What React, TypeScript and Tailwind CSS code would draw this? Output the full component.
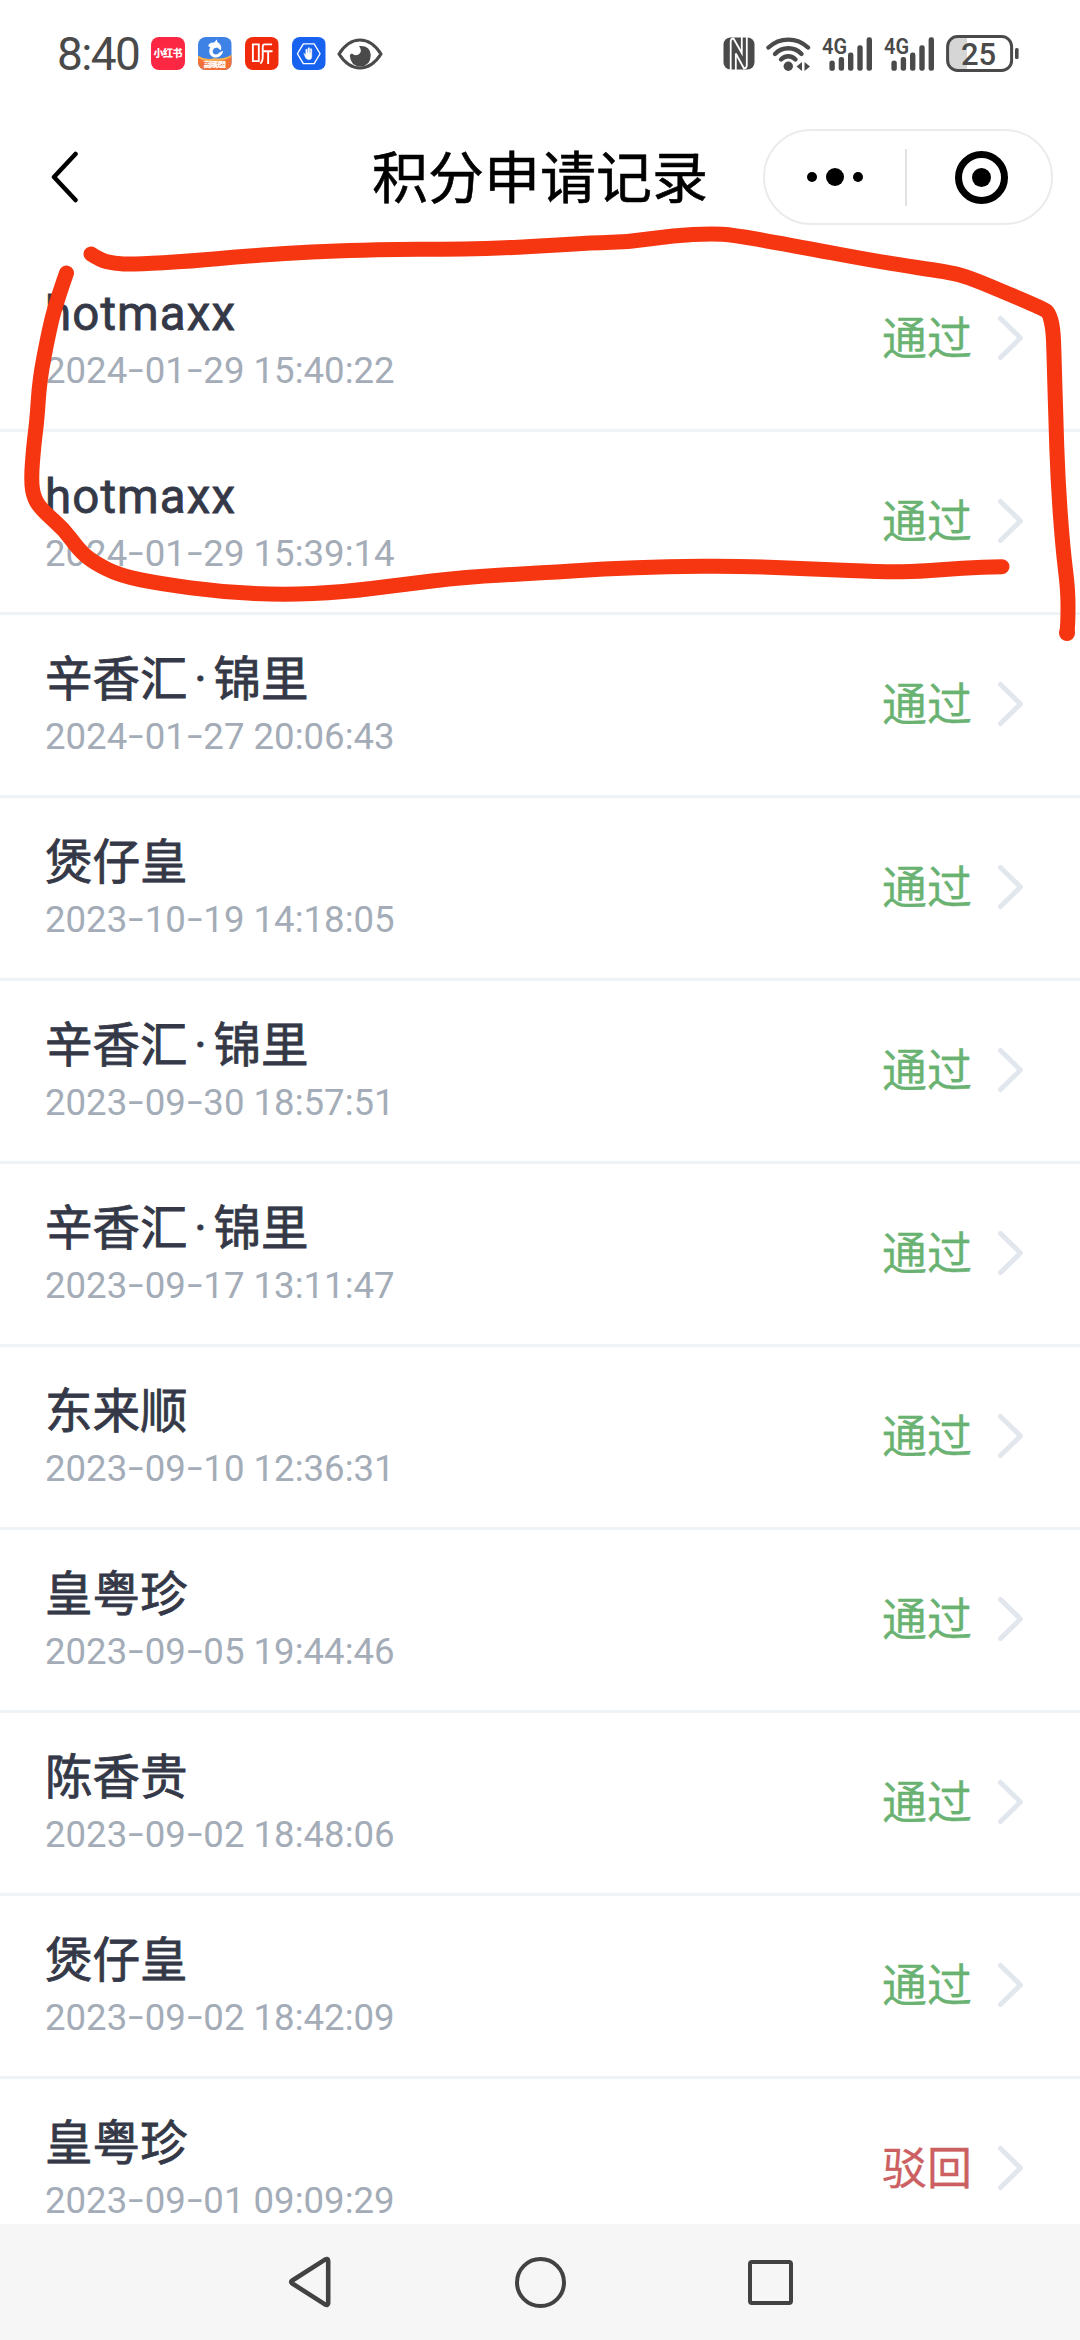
import React from "react";

type RecordItem = {
  id: number;
  name: string;
  time: string;
  status: "通过" | "驳回";
};

const records: RecordItem[] = [
  { id: 1, name: "hotmaxx", time: "2024-01-29 15:40:22", status: "通过" },
  { id: 2, name: "hotmaxx", time: "2024-01-29 15:39:14", status: "通过" },
  { id: 3, name: "辛香汇·锦里", time: "2024-01-27 20:06:43", status: "通过" },
  { id: 4, name: "煲仔皇", time: "2023-10-19 14:18:05", status: "通过" },
  { id: 5, name: "辛香汇·锦里", time: "2023-09-30 18:57:51", status: "通过" },
  { id: 6, name: "辛香汇·锦里", time: "2023-09-17 13:11:47", status: "通过" },
  { id: 7, name: "东来顺", time: "2023-09-10 12:36:31", status: "通过" },
  { id: 8, name: "皇粤珍", time: "2023-09-05 19:44:46", status: "通过" },
  { id: 9, name: "陈香贵", time: "2023-09-02 18:48:06", status: "通过" },
  { id: 10, name: "煲仔皇", time: "2023-09-02 18:42:09", status: "通过" },
  { id: 11, name: "皇粤珍", time: "2023-09-01 09:09:29", status: "驳回" },
];

// Pen strokes, as x/y points
const topStroke = [
  [91, 254], [100, 260], [114, 263.5], [133, 264.500], [193, 261], [241, 256.500], [300, 252.500], [348, 250.500], [406, 249],
  [458, 249.5], [513, 247.5], [540, 246], [592, 243], [631, 241.7], [674, 235.3], [712, 233.5], [733, 235],
  [781, 243.3], [884, 262.7], [950, 272.3], [968, 277], [1001, 290.7], [1044, 309], [1049, 313], [1053, 328],
  [1054, 353], [1055.5, 410], [1058, 483], [1063, 550], [1068, 590], [1068, 620], [1067, 633],
];
const bottomStroke = [
  [66.5, 273], [55, 306], [48, 336], [39.6, 380], [37, 420], [34, 443], [31, 480], [34, 499], [44, 512],
  [63.7, 529], [79, 550], [93, 562], [120, 575.7], [162, 584], [220, 591.7], [282, 595], [344, 592],
  [399, 585], [465, 577], [540, 573], [604, 569], [667, 566.7], [736, 566], [815, 569], [884, 572],
  [919, 571.5], [963, 568], [1002, 566.7],
];

const toPath = (points: number[][]) => {
  let d = `M${points[0][0]} ${points[0][1]}`;
  for (let i = 1; i < points.length - 1; i++) {
    const [x, y] = points[i];
    const [nx, ny] = points[i + 1];
    d += ` Q${x} ${y} ${(x + nx) / 2} ${(y + ny) / 2}`;
  }
  const last = points[points.length - 1];
  return `${d} L${last[0]} ${last[1]}`;
};

const Signal = () => (
  <svg className="h-[54px] w-[51px]" viewBox="0 -10 51 54" fill="#4a4a4a">
    <text x="0" y="16.6" fontSize="22" fontWeight="600" textLength="25" lengthAdjust="spacingAndGlyphs">4G</text>
    <rect x="7.4" y="23.4" width="5.4" height="10.4" rx="2.6" />
    <rect x="16.7" y="20" width="5.4" height="13.8" rx="2.4" />
    <rect x="26" y="15.5" width="5.4" height="18.3" rx="2.4" />
    <rect x="35.3" y="8.3" width="5.4" height="25.5" rx="2.4" />
    <rect x="44.6" y="0.3" width="5.4" height="33.5" rx="2.4" />
  </svg>
);

const StatusBar = () => (
  <div className="flex h-[107px] items-center pl-[57px] pr-[61px] text-[#4a4a4a]">
    <span className="w-[94px] whitespace-nowrap text-[46px] leading-none tracking-[-1.6px]">8:40</span>

    <div className="flex items-center gap-[13.5px]">
      <div className="flex h-[33.5px] w-[33.5px] items-center justify-center whitespace-nowrap rounded-[8px] bg-[#fb2743] text-[10px] font-black leading-none tracking-[-0.5px] text-white">
        小红书
      </div>
      <svg className="h-[33.5px] w-[33.5px] rounded-[8px]" viewBox="0 0 34 34">
        <rect width="34" height="34" fill="#3f82e6" />
        <path d="M0 20 Q8 25 17 22 Q26 24 34 19 V34 H0Z" fill="#f26f35" />
        <path d="M0 19 Q8 24 17 21.500 Q26 23 34 18 V20 Q27 25 17 24 Q7 26 0 21Z" fill="#f9b04d" />
        <path d="M10.500 9.500 C10.500 6 14 5.500 16.500 5.500 L19 2.500 L20 5.500 C23 7 24.500 10 23 13.500 L20 11 C16.500 10.500 14.500 12.500 15 15.500 C16 18.500 20 18.500 22 15.500 L25.500 14 C24.500 19.500 20 22 15.500 20.500 C11 18.500 10.500 14 12.500 10.500 Z" fill="#fff" />
        <text x="17" y="30" fontSize="7" fontWeight="900" fill="#fff" textAnchor="middle" textLength="23">高佣联盟</text>
      </svg>
      <svg className="h-[33.5px] w-[33.5px] rounded-[8px]" viewBox="0 0 34 34" fill="none" stroke="#fff" strokeWidth="1.9">
        <rect width="34" height="34" fill="#f02b0c" stroke="none" />
        <path d="M8 7.5H14V24.500H8Z M27.500 7.500H20Q18 7.500 18 10V20Q18 25 15.500 27 M18 14.500H28 M23.500 14.500V27.500" />
      </svg>
      <svg className="h-[33.5px] w-[33.5px] rounded-[8px]" viewBox="0 0 34 34">
        <rect width="34" height="34" fill="#1763f0" />
        <path d="M11.500 7H22.500L28.500 17L22.500 27H11.500L5.500 17Z" fill="none" stroke="#fff" strokeWidth="1.4" strokeLinejoin="round" />
        <path d="M12 16.500L14 18V12.500H15.500V16H16.300V11H17.800V16H18.600V12H20.100V20Q20 23 17 23Q14.500 23 13.500 20.500Z" fill="#fff" stroke="#fff" strokeWidth="0.4" />
      </svg>
    </div>

    <svg className="ml-[11px] h-[32px] w-[46px]" viewBox="0 0 46 32">
      <path d="M2 16 Q11 2 23 2 Q35 2 44 16 Q35 30 23 30 Q11 30 2 16Z" fill="none" stroke="#4a4a4a" strokeWidth="3.2" strokeLinejoin="round" />
      <path d="M22 8 Q33 7 33.800 17 Q33.500 28 23.500 28.500 Q13.500 28 12.800 17.500 Q13.500 15.500 15 15.500 Q18 18.500 21.500 16.500 Q26 13 22 8Z" fill="#4a4a4a" />
    </svg>

    <div className="ml-auto flex items-center">
      <svg className="h-[33px] w-[32px]" viewBox="0 0 32 33">
        <rect x="0.500" y="0.500" width="31" height="32" rx="7" fill="#4a4a4a" />
        <path d="M7.700 33V5Q7.700 1.500 10.500 1.500L18.800 16V0 M23.800 0V28Q23.800 31.500 21 31.500L12.800 16.500V33" fill="none" stroke="#fff" strokeWidth="1.800" />
      </svg>
      <svg className="ml-[11px] h-[34px] w-[45px]" viewBox="0 0 45 34" fill="none" stroke="#4a4a4a" strokeWidth="4.4" strokeLinecap="round">
        <path d="M2.500 10.500Q11 2.600 22.300 2.600Q33.500 2.600 42 10.500" />
        <path d="M9 17Q14.500 11.300 22.300 11.300Q30 11.300 35.500 17" />
        <path d="M15 22.500Q18 19.300 22.300 19.300Q26.500 19.300 29.500 22.500" />
        <circle cx="22.300" cy="29.200" r="4.700" fill="#4a4a4a" stroke="none" />
        <path d="M30.500 29.500L36 25V34Z M44 29.500L38.500 25V34Z" fill="#4a4a4a" stroke="none" />
      </svg>
      <div className="ml-[11px] flex gap-[11px]">
        <Signal />
        <Signal />
      </div>
      <svg className="ml-[11px] h-[37px] w-[73px]" viewBox="0 0 73 37">
        <path d="M11 2H21V35H11Q2 35 2 26V11Q2 2 11 2Z" fill="#d6d6d6" />
        <rect x="1.600" y="1.600" width="64" height="33.800" rx="10" fill="none" stroke="#4a4a4a" strokeWidth="3" />
        <rect x="69" y="13" width="3.600" height="11" rx="1.500" fill="#4a4a4a" />
        <text x="32.500" y="29.500" fontSize="31" fontWeight="500" fill="#4a4a4a" textAnchor="middle">25</text>
      </svg>
    </div>
  </div>
);

const Header = () => (
  <div className="grid h-[140px] grid-cols-[1fr_auto_1fr] items-center pl-[51px] pr-[27px]">
    <svg className="h-[52px] w-[28px]" viewBox="0 0 28 52" fill="none" stroke="#000" strokeWidth="4.500" strokeLinecap="round" strokeLinejoin="round">
      <path d="M24.500 3L3 26L24.500 49" />
    </svg>
    <h1 className="-ml-6 whitespace-nowrap pt-[3px] text-[56px] leading-none text-black [-webkit-text-stroke:0.6px_#000]">
      积分申请记录
    </h1>
    <div className="flex h-[96px] w-[290px] items-center justify-self-end rounded-full border-2 border-[#ebebeb]">
      <div className="flex h-full flex-1 items-center justify-center">
        <div className="h-[10.5px] w-[10.5px] rounded-full bg-black" />
        <div className="mx-[8.500px] h-[18.500px] w-[18.500px] rounded-full bg-black" />
        <div className="h-[10.5px] w-[10.5px] rounded-full bg-black" />
      </div>
      <div className="h-[57px] w-[2px] bg-[#e2e2e2]" />
      <div className="flex h-full flex-1 items-center justify-center pl-1">
        <div className="flex h-[53px] w-[53px] items-center justify-center rounded-full border-[7px] border-black">
          <div className="h-[19px] w-[19px] rounded-full bg-black" />
        </div>
      </div>
    </div>
  </div>
);

const RecordTime = ({ value }: { value: string }) => (
  <p className="mt-[7px] whitespace-nowrap text-[36.6px] leading-[44px] text-[#a3acb7]">
    {value.split("-").map((part, index) => (
      <React.Fragment key={index}>
        {index > 0 && <span className="inline-block w-[17.5px] -translate-y-px scale-x-150 text-center">-</span>}
        {part}
      </React.Fragment>
    ))}
  </p>
);

const RecordName = ({ value }: { value: string }) => {
  const isLatin = /^[a-z]+$/i.test(value);
  return (
    <h2
      className={`whitespace-nowrap text-[47.5px] leading-[56px] text-[#343847] ${
        isLatin ? "tracking-[1.1px] [-webkit-text-stroke:0.8px_#343847]" : "[-webkit-text-stroke:0.8px_#343847]"
      }`}
    >
      {value.split("·").map((part, index) => (
        <React.Fragment key={index}>
          {index > 0 && <span className="inline-block w-[26px] text-center">·</span>}
          {part}
        </React.Fragment>
      ))}
    </h2>
  );
};

const App = () => {
  return (
    <div className="relative flex h-[2340px] w-[1080px] flex-col overflow-hidden bg-white font-['Roboto','Noto_Sans_CJK_SC',sans-serif]">
      <StatusBar />
      <Header />

      {/* Record list */}
      <ul className="mt-[2px] min-h-0 flex-1 overflow-hidden">
        {records.map((record) => (
          <li key={record.id} className="flex h-[183px] items-center border-b-[3px] border-[#eff2f7] pb-[2px] pl-[45px] pr-[56px]">
            <div className="flex-1 pt-[2px]">
              <RecordName value={record.name} />
              <RecordTime value={record.time} />
            </div>
            <span
              className={`pt-[2px] text-[45px] leading-none [-webkit-text-stroke:0.3px] ${
                record.status === "通过" ? "text-[#6ab272]" : "text-[#cb5f61]"
              }`}
            >
              {record.status}
            </span>
            <svg className="ml-[25px] h-[46px] w-[27px]" viewBox="0 0 27 46" fill="none" stroke="#e2e7ee" strokeWidth="5" strokeLinecap="round" strokeLinejoin="round">
              <path d="M3.500 3.500L23.500 23L3.500 42.500" />
            </svg>
          </li>
        ))}
      </ul>

      {/* System navigation */}
      <div className="flex h-[116px] shrink-0 items-center justify-center gap-[180px] bg-[#f6f6f6]">
        <svg className="h-[52px] w-[50px]" viewBox="0 0 50 52" fill="none" stroke="#424242" strokeWidth="4.600" strokeLinejoin="round">
          <path d="M7.300 24.500L40 3.600Q43.200 2 43.200 5V47Q43.200 50 40 48.400L7.300 27.500Q5 26 7.300 24.500Z" />
        </svg>
        <div className="h-[51px] w-[51px] rounded-full border-[4.600px] border-[#424242]" />
        <div className="flex w-[50px] justify-center">
          <div className="h-[45px] w-[45px] rounded-[4px] border-[4.600px] border-[#424242]" />
        </div>
      </div>

      {/* Pen marks over the page */}
      <svg className="pointer-events-none absolute left-0 top-0 h-[700px] w-[1080px]" viewBox="0 0 1080 700" fill="none" stroke="#f63611" strokeWidth="15" strokeLinecap="round" strokeLinejoin="round">
        <path d={toPath(topStroke)} />
        <path d={toPath(bottomStroke)} />
        <circle cx="1067" cy="633" r="8" fill="#f63611" stroke="none" />
      </svg>
    </div>
  );
};

export default App;
